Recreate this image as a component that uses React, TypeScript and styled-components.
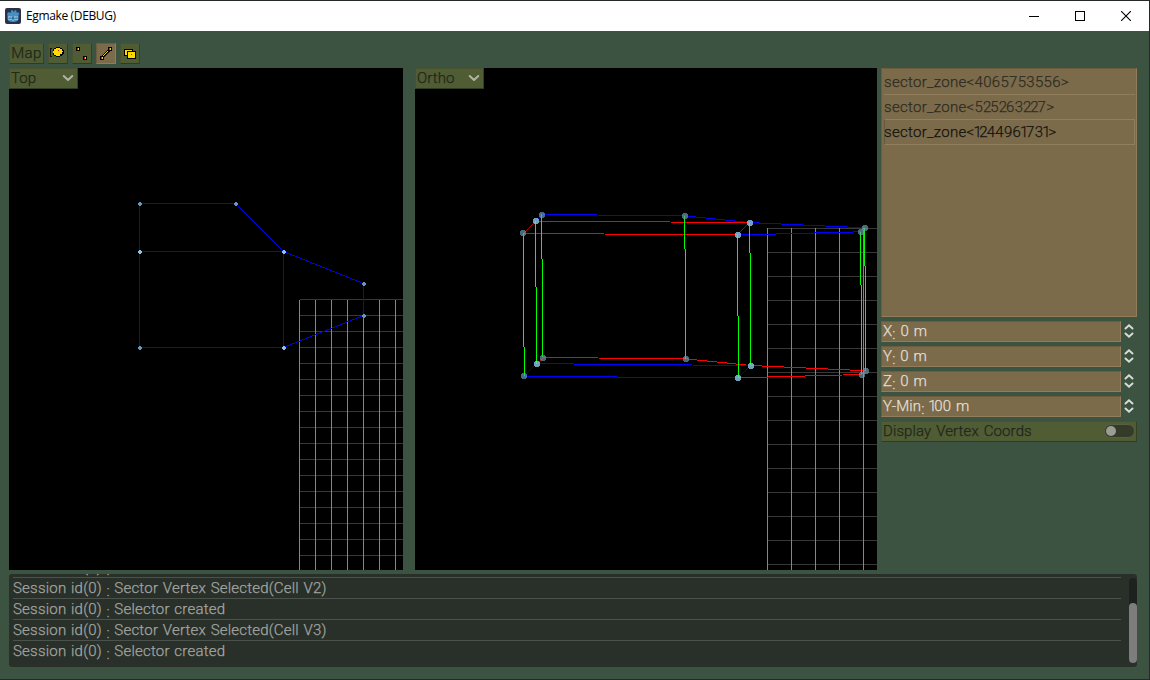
import React from "react";
import styled, { createGlobalStyle, css } from "styled-components";

const Global = createGlobalStyle`
  * { box-sizing: border-box; }
  body { margin: 0; overflow: hidden; }
`;

const Window = styled.div`
  width: 1150px;
  height: 680px;
  display: flex;
  flex-direction: column;
  background: #3c5341;
  border: solid #26292a;
  border-width: 1px 1px 1px 0;
  font: 300 15px/20px Roboto, "Liberation Sans", sans-serif;
`;

const TitleBar = styled.header`
  height: 30px;
  flex: none;
  display: flex;
  align-items: center;
  background: #fff;
  padding-left: 5px;
`;

const Title = styled.h1`
  margin: 0 auto 0 5px;
  font: 400 12px/16px "Open Sans", sans-serif;
  letter-spacing: -0.36px;
  color: #000;
`;

const WindowButton = styled.span`
  width: 46px;
  height: 30px;
  display: grid;
  place-items: center;
`;

const Body = styled.main`
  padding: 12px 12px 12px 9px;
  flex: 1;
  display: flex;
  flex-direction: column;
  -webkit-text-stroke: 0.25px currentColor;
`;

const Toolbar = styled.nav`
  display: flex;
  gap: 4px;
  height: 21px;
  margin-bottom: 4px;
`;

const olive = css`
  background: #4f5c34;
  border: 1px solid #47542f;
  border-right-color: #35421f;
  border-bottom-color: #303c20;
  color: #20271a;
`;

const tan = css`
  background: #7b6b4a;
  border: 1px solid #6d5d3e;
  border-right-color: #917d5a;
  border-bottom-color: #917d5a;
`;

const ToolButton = styled.button<{ $wide?: boolean; $active?: boolean }>`
  ${(p) => (p.$active ? tan : olive)}
  width: ${(p) => (p.$wide ? 35 : 20)}px;
  height: 21px;
  padding: 0 0 ${(p) => (p.$wide ? 1 : 0)}px;
  display: flex;
  align-items: center;
  justify-content: center;
  font: inherit;
  line-height: 18px;
  letter-spacing: 0.4px;
`;

const Workspace = styled.div`
  display: flex;
  height: 502px;
  margin-bottom: 4px;
`;

const Viewport = styled.section<{ $width: number; $gap: number }>`
  position: relative;
  width: ${(p) => p.$width}px;
  margin-right: ${(p) => p.$gap}px;
  background: #000;
  flex: none;
  svg { display: block; }
`;

const ViewSelect = styled.button`
  ${olive}
  position: absolute;
  top: 0;
  left: 0;
  width: 69px;
  height: 21px;
  padding: 0 3px 2px 1px;
  display: flex;
  align-items: center;
  justify-content: space-between;
  font: inherit;
  letter-spacing: 0.1px;
`;

const Inspector = styled.aside`
  flex: 1;
  display: flex;
  flex-direction: column;
  gap: 4px;
`;

const ZoneList = styled.ul`
  ${tan}
  list-style: none;
  margin: 0;
  height: 249px;
  padding: 0 1px 0 2px;
`;

const ZoneItem = styled.li<{ $selected?: boolean }>`
  height: ${(p) => (p.$selected ? 26 : 25)}px;
  padding-top: 2px;
  letter-spacing: 0.3px;
  color: ${(p) => (p.$selected ? "#14130f" : "#2f2c25")};
  border-bottom: 1px solid #8f7d5e;
  ${(p) =>
    p.$selected &&
    css`
      margin-top: -1px;
      border: 1px solid #917f5f;
      border-left-color: #63573f;
      & > span { margin-left: -1px; }
    `}
  &:first-child { height: 26px; padding-top: 3px; }
`;

const Digit = styled.span<{ $before: number; $after: number }>`
  margin-left: ${(p) => -p.$before}px;
  letter-spacing: ${(p) => -p.$after}px;
`;

const SpinRow = styled.div`
  display: flex;
  height: 21px;
  gap: 3px;
  align-items: center;
  & > svg { margin-top: -1px; }
`;

const SpinField = styled.div`
  ${tan}
  width: 240px;
  height: 21px;
  padding-left: 1px;
  line-height: 18px;
  color: #e2dfd6;
  white-space: pre;
  letter-spacing: 0.15px;
  word-spacing: 1px;
`;

const Colon = styled.span`
  display: inline-block;
  transform: translateY(3px);
`;

const ToggleRow = styled.div`
  ${olive}
  height: 21px;
  padding: 0 1px 1px 1px;
  display: flex;
  align-items: center;
  justify-content: space-between;
  letter-spacing: 0.1px;
  word-spacing: 1.2px;
`;

const Toggle = styled.span`
  width: 31px;
  height: 14px;
  border-radius: 7px;
  background: #343b29;
  border: 1px solid #596047;
  display: flex;
  align-items: center;
  padding-left: 1px;
  &::before {
    content: "";
    width: 10px;
    height: 10px;
    border-radius: 50%;
    background: #9b9c93;
  }
`;

const Log = styled.footer`
  height: 93px;
  display: flex;
  justify-content: space-between;
  background: #29302a;
  border-radius: 3px;
  overflow: hidden;
  padding: 0 0 0 4px;
`;

const LogLines = styled.div`
  width: 1108px;
  height: 93px;
  display: flex;
  flex-direction: column;
  justify-content: flex-end;
  padding-bottom: 6px;
`;

const LogLine = styled.div`
  flex: none;
  height: 21px;
  line-height: 21px;
  border-top: 1px solid #4b514b;
  color: #a2a5a0;
  letter-spacing: 0.22px;
  word-spacing: 0.7px;
`;

const ScrollTrack = styled.div`
  width: 8px;
  height: 85px;
  margin-top: 4px;
  border-radius: 4px;
  background: #1e221f;
  display: flex;
  align-items: flex-end;
  &::after {
    content: "";
    width: 8px;
    height: 60px;
    border-radius: 4px;
    background: #7c7d7c;
  }
`;

const Logo = () => (
  <svg width="16" height="16" viewBox="0 0 16 16">
    <rect width="16" height="16" rx="2" fill="#2b3148" />
    <path d="M2 6l1.500-2 1.500.7 1-.5V2.500l1.500-.5.7 1.500h1.200L10 2l1.400.5v1.700l1 .5L13 4l1.500 2-1 1v4c0 2-2.500 3-5.500 3s-5.500-1-5.500-3V7z" fill="#458fc2" />
    <path d="M3.500 8h3v2h-3zM9.500 8h3v2h-3z" fill="#b9d7e8" />
    <path d="M4.500 8.500h1.200v1.200H4.500zM10.500 8.500h1.200v1.200h-1.200zM7.500 9h1v2h-1z" fill="#294b68" />
    <path d="M3 11.500h3.500l1 .8h1.200l1-.8H13" stroke="#9ac5dc" strokeWidth=".8" fill="none" />
  </svg>
);

const Chevron = () => (
  <svg width="12" height="8" viewBox="0 0 12 8">
    <path d="M1.700 2l4.300 4 4.300-4" fill="none" stroke="#b0b5a4" strokeWidth="2" strokeLinecap="round" strokeLinejoin="round" />
  </svg>
);

const SpinArrows = () => (
  <svg width="10" height="16" viewBox="0 0 10 16">
    <path d="M1.500 5.500L5 2.300l3.500 3.200M1.500 10.500L5 13.700l3.500-3.200" fill="none" stroke="#d8dcd7" strokeWidth="2" strokeLinecap="round" />
  </svg>
);

const PixelIcon = ({ children }: { children: React.ReactNode }) => (
  <svg width="16" height="17" viewBox="0 0 16 17" shapeRendering="crispEdges">
    {children}
  </svg>
);

const SectorIcon = () => (
  <PixelIcon>
    <path d="M0 3h2v1H1v7h1v1H0z" fill="#111" />
    <path d="M6 2h4v1h2v1h1v1h1v4h-1v1h-1v1h-2v1H6v-1H4v-1H3V4h1V3h2z" fill="#000" />
    <path d="M6 3h4v1h2v2h1v1h-1v2h-2v2H6v-1H4V8H3V6h1V4h2z" fill="#ffdc00" />
    <path d="M8 5h1v1H8z" fill="#e01010" />
  </PixelIcon>
);

const Node = ({ x, y }: { x: number; y: number }) => (
  <>
    <rect x={x} y={y} width="4" height="4" fill="#000" />
    <rect x={x + 1} y={y + 1} width="2" height="2" fill="#ffc83c" />
    <rect x={x + 1} y={y + 1} width="1" height="2" fill="#f01c1c" />
  </>
);

const VertexIcon = () => (
  <PixelIcon>
    <Node x={2} y={2} />
    <Node x={9} y={11} />
  </PixelIcon>
);

const steps = [0, 1, 2, 3, 4, 5];

const EdgeIcon = () => (
  <PixelIcon>
    {steps.map((i) => (
      <rect key={i} x={4 + i} y={10 - i} width="3" height="2" fill="#000" />
    ))}
    {steps.map((i) => (
      <rect key={i} x={5 + i} y={10 - i} width="1" height="1" fill="#ffdc00" />
    ))}
    <Node x={2} y={11} />
    <Node x={10} y={2} />
  </PixelIcon>
);

const FaceIcon = () => (
  <PixelIcon>
    <path d="M2 4h9v7H2z" fill="#000" />
    <path d="M3 5h7v5H3z" fill="#ffdc00" />
    <path d="M5 6h9v8H5z" fill="#000" />
    <path d="M6 7h7v6H6z" fill="#ffdc00" />
    <path d="M9 9h1v1H9z" fill="#e01010" />
  </PixelIcon>
);

const BLUE = "#0000ff";
const RED = "#ff0000";
const GREEN = "#00ff00";

type GridProps = { x: number; y: number; step: number; right: number; bottom: number; inset: number };

const Grid = ({ x, y, step, right, bottom, inset }: GridProps) => {
  const columns: number[] = [];
  const rows: number[] = [];
  for (let c = x; c < right; c += step) columns.push(c);
  for (let r = y; r < bottom; r += step) rows.push(r);
  return (
    <g>
      {rows.map((r) => (
        <rect key={r} x={x + inset} y={r} width={right - x} height="1" fill="#383838" />
      ))}
      {columns.map((c) => (
        <rect key={c} x={c} y={y + inset} width="1" height={bottom - y} fill="#868686" />
      ))}
    </g>
  );
};

type Point = [number, number];

const planPoints: { at: Point; shared?: boolean }[] = [
  { at: [140, 204] },
  { at: [236, 204] },
  { at: [140, 252], shared: true },
  { at: [284, 252], shared: true },
  { at: [140, 348] },
  { at: [284, 348], shared: true },
  { at: [364, 284] },
  { at: [364, 316] },
];

const TopView = () => (
  <svg width="394" height="502" viewBox="9 68 394 502" shapeRendering="crispEdges">
    <Grid x={299} y={299} step={16} right={403} bottom={570} inset={1} />
    <path
      d="M139.500 203.500H235.500L283.500 251.500H139.500M139.500 203.500V347.500H283.500V251.500L363.500 283.500V315.500L283.500 347.500"
      fill="none"
      stroke={BLUE}
    />
    {planPoints.map(({ at: [x, y], shared }) => (
      <path
        key={`${x}-${y}`}
        d={`M${x - 1} ${y - 2}h2v1h1v2h-1v1h-2v-1h-1v-2h1z`}
        fill={shared ? "#86c4ea" : "#5f9bc0"}
      />
    ))}
  </svg>
);

const upper: Record<string, Point> = {
  a: [541.7, 214.5],
  b: [535.5, 221],
  c: [523.3, 233.4],
  d: [684.8, 215.8],
  e: [749.8, 222.6],
  f: [737.5, 235],
  g: [864.8, 227.8],
  h: [860.6, 231.8],
};

const lower: Record<string, Point> = {
  a: [542.7, 357.5],
  b: [536.6, 363.7],
  c: [524.2, 376.4],
  d: [685.7, 358.8],
  e: [750.8, 365.5],
  f: [738.4, 377.8],
  g: [865.6, 370.7],
  h: [861.7, 374.5],
};

const upperEdges: [string, string][] = [
  ["ab", BLUE], ["ad", BLUE], ["de", BLUE], ["eg", BLUE], ["gh", BLUE], ["hf", BLUE],
  ["be", RED], ["bc", RED], ["cf", RED], ["fe", RED],
];

const lowerEdges: [string, string][] = [
  ["ab", RED], ["ad", RED], ["de", RED], ["eg", RED], ["gh", RED], ["hf", RED],
  ["be", BLUE], ["bc", BLUE], ["cf", BLUE], ["fe", BLUE],
];

const Edge = ({ from, to, color }: { from: Point; to: Point; color: string }) => {
  const short = Math.hypot(to[0] - from[0], to[1] - from[1]) < 20;
  return (
    <line x1={from[0]} y1={from[1]} x2={to[0]} y2={to[1]} stroke={color} strokeWidth={short ? 0.7 : 1} />
  );
};

const Vertex = ({ at: [x, y], bright }: { at: Point; bright: boolean }) => (
  <circle cx={Math.round(x)} cy={Math.round(y)} r="3" fill={bright ? "#86c6e0" : "#6a9eb2"} fillOpacity={bright ? 0.82 : 0.68} />
);

const OrthoView = () => (
  <svg width="462" height="502" viewBox="415 68 462 502" shapeRendering="crispEdges">
    <Grid x={767} y={228} step={24} right={877} bottom={570} inset={0} />
    {upperEdges.map(([k, color]) => (
      <Edge key={k} from={upper[k[0]]} to={upper[k[1]]} color={color} />
    ))}
    {lowerEdges.map(([k, color]) => (
      <Edge key={k} from={lower[k[0]]} to={lower[k[1]]} color={color} />
    ))}
    {Object.keys(upper).map((k) => (
      <Edge key={k} from={upper[k]} to={lower[k]} color={GREEN} />
    ))}
    {Object.keys(upper).map((k) => (
      <g key={k}>
        <Vertex at={upper[k]} bright={"bef".includes(k)} />
        <Vertex at={lower[k]} bright={"bef".includes(k)} />
      </g>
    ))}
  </svg>
);

const digitTrim: Record<string, [number, number]> = { "1": [1.2, 2.2], "2": [0.3, 0.9] };

const Proportional = ({ text }: { text: string }) => (
  <>
    {text.split("").map((ch, i) => {
      const trim = digitTrim[ch];
      return trim ? <Digit key={i} $before={trim[0]} $after={trim[1]}>{ch}</Digit> : ch;
    })}
  </>
);

const zones = ["4065753556", "525263227", "1244961731"];

const fields: [string, string][] = [
  ["X", "0 m"],
  ["Y", "0 m"],
  ["Z", "0 m"],
  ["Y-Min", "100 m"],
];

const messages = [
  "Selector created",
  "Sector Vertex Selected(Cell V2)",
  "Selector created",
  "Sector Vertex Selected(Cell V3)",
  "Selector created",
];

export default function App() {
  return (
    <Window>
      <Global />
      <TitleBar>
        <Logo />
        <Title>Egmake (DEBUG)</Title>
        <WindowButton>
          <svg width="10" height="10" shapeRendering="crispEdges"><path d="M0 5.500h10" stroke="#000" /></svg>
        </WindowButton>
        <WindowButton>
          <svg width="10" height="10" shapeRendering="crispEdges"><path d="M.5.5h9v9h-9z" fill="none" stroke="#000" /></svg>
        </WindowButton>
        <WindowButton>
          <svg width="10" height="10"><path d="M0 0l10 10M10 0L0 10" stroke="#000" strokeWidth="1.100" /></svg>
        </WindowButton>
      </TitleBar>
      <Body>
        <Toolbar>
          <ToolButton $wide>Map</ToolButton>
          <ToolButton><SectorIcon /></ToolButton>
          <ToolButton><VertexIcon /></ToolButton>
          <ToolButton $active><EdgeIcon /></ToolButton>
          <ToolButton><FaceIcon /></ToolButton>
        </Toolbar>
        <Workspace>
          <Viewport $width={394} $gap={12}>
            <TopView />
            <ViewSelect>Top<Chevron /></ViewSelect>
          </Viewport>
          <Viewport $width={462} $gap={4}>
            <OrthoView />
            <ViewSelect>Ortho<Chevron /></ViewSelect>
          </Viewport>
          <Inspector>
            <ZoneList>
              {zones.map((id, i) => (
                <ZoneItem key={id} $selected={i === 2}>
                  <span>sector_zone&lt;<Proportional text={id} />&gt;</span>
                </ZoneItem>
              ))}
            </ZoneList>
            {fields.map(([label, value]) => (
              <SpinRow key={label}>
                <SpinField>{label}<Colon>:</Colon> <Proportional text={value} /></SpinField>
                <SpinArrows />
              </SpinRow>
            ))}
            <ToggleRow>Display Vertex Coords<Toggle /></ToggleRow>
          </Inspector>
        </Workspace>
        <Log>
          <LogLines>
            {messages.map((text, i) => (
              <LogLine key={i}>Session id(0) <Colon>:</Colon> {text}</LogLine>
            ))}
          </LogLines>
          <ScrollTrack />
        </Log>
      </Body>
    </Window>
  );
}
